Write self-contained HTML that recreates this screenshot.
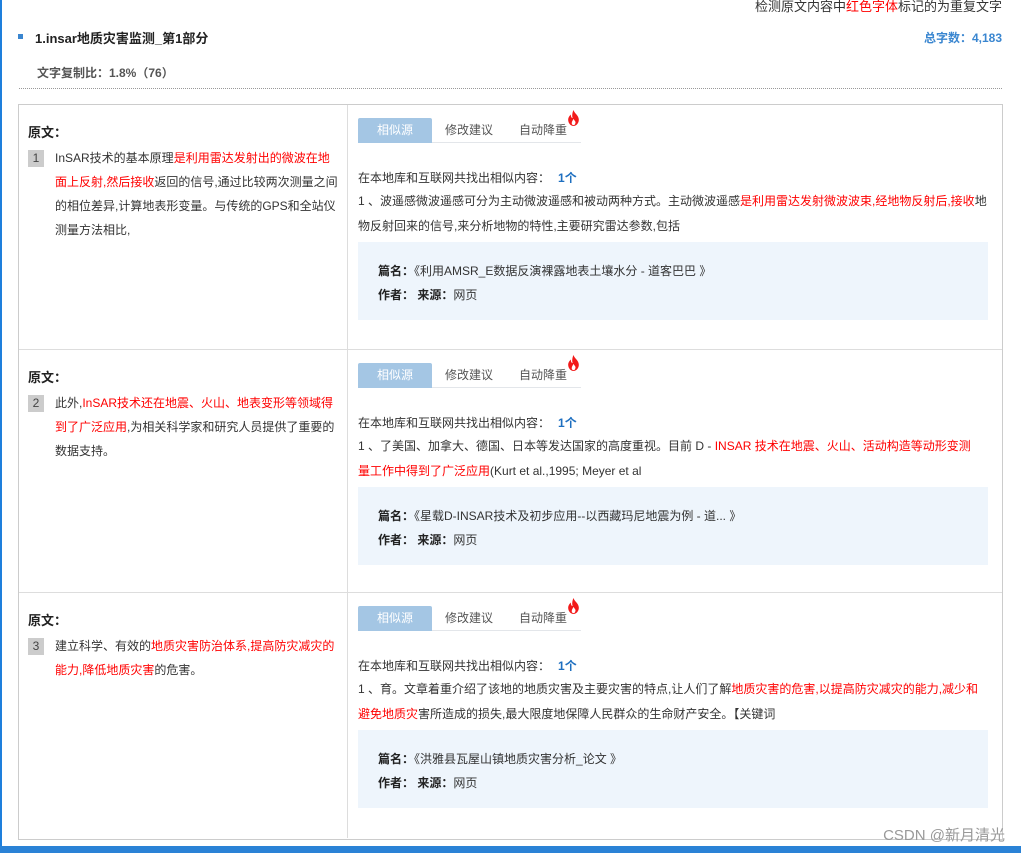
<!DOCTYPE html>
<html><head><meta charset="utf-8"><style>
*{margin:0;padding:0;box-sizing:border-box}
body{width:1021px;height:853px;position:relative;overflow:hidden;background:#fff;font-family:"Liberation Sans","Noto Sans CJK SC",sans-serif;font-size:12px;color:#333}
.a{position:absolute;white-space:nowrap}
.r{color:#f00}
.row{position:absolute;left:19px;width:983px}
.row .lab{position:absolute;left:9px;top:17px;font-size:13px;font-weight:bold;color:#222}
.row .num{position:absolute;left:9px;top:45px;width:16px;height:17px;background:#ccc;text-align:center;line-height:17px;font-size:12px;color:#444}
.row .lt{position:absolute;left:36px;top:41px;width:285px;line-height:24px;font-size:12px;white-space:normal}
.row .vd{position:absolute;left:328px;top:0;bottom:0;width:1px;background:#ddd}
.tabs{position:absolute;left:339px;top:13px;width:223px;height:25px;border-bottom:1px solid #e3e6ea}
.tab1{position:absolute;left:0;top:0;width:74px;height:25px;background:#a4c6e4;color:#fff;text-align:center;line-height:25px;border-radius:2px 2px 0 0}
.tab2{position:absolute;left:87px;top:0;line-height:25px;color:#555}
.tab3{position:absolute;left:161px;top:0;line-height:25px;color:#555}
.fire{position:absolute;left:548px;top:5px}
.find{position:absolute;left:339px;top:64px}
.find b{color:#1e6fc0;margin-left:8px}
.l1{position:absolute;left:339px;top:87px}
.l2{position:absolute;left:339px;top:112px}
.box{position:absolute;left:339px;top:137px;width:630px;height:78px;background:#eef5fc}
.box .p{position:absolute;left:20px;top:20px}
.box .q{position:absolute;left:20px;top:44px}
.box b{color:#222}
</style></head><body>
<div class="a" style="left:0;top:0;width:2px;height:853px;background:#1e7fdc"></div>
<div class="a" style="left:0;top:846px;width:1021px;height:7px;background:#2a82d6"></div>
<div class="a" style="right:19px;top:-4px;font-size:13px;color:#333">检测原文内容中<span class="r">红色字体</span>标记的为重复文字</div>
<div class="a" style="left:18px;top:34px;width:5px;height:5px;background:#3a86d0"></div>
<div class="a" style="left:35px;top:28px;font-size:13px;font-weight:bold;color:#222">1.insar地质灾害监测_第1部分</div>
<div class="a" style="right:19px;top:29px;font-size:12px;font-weight:bold;color:#3a86d0">总字数：4,183</div>
<div class="a" style="left:37px;top:64px;font-size:12px;font-weight:bold;color:#555">文字复制比：1.8%（76）</div>
<div class="a" style="left:19px;top:88px;width:983px;border-top:1px dotted #999"></div>
<div class="a" style="left:18px;top:104px;width:985px;height:736px;border:1px solid #ccc"></div>

<svg width="0" height="0" style="position:absolute"><defs><symbol id="f" viewBox="0 0 14 18"><path d="M7 0C8 4 13 6 13 11C13 15 10 18 7 18C4 18 1 15 1 11C1 8 3 6 4 5C4 8 5 9 6 9C5 6 6 2 7 0Z" fill="#f21a1a"/><path d="M7 10C8 12 10 13 9 15C9 16 8 17 7 17C6 17 5 16 5 15C5 13 6 12 7 10Z" fill="#fff"/></symbol></defs></svg>

<div class="row" style="top:105px;height:245px;border-bottom:1px solid #ddd">
<div class="lab">原文：</div><div class="num">1</div>
<div class="lt">InSAR技术的基本原理<span class="r">是利用雷达发射出的微波在地面上反射,然后接收</span>返回的信号,通过比较两次测量之间的相位差异,计算地表形变量。与传统的GPS和全站仪测量方法相比,</div>
<div class="vd"></div>
<div class="tabs"><div class="tab1">相似源</div><div class="tab2">修改建议</div><div class="tab3">自动降重</div></div>
<svg class="fire" width="13" height="16"><use href="#f"/></svg>
<div class="a find">在本地库和互联网共找出相似内容：<b>1个</b></div>
<div class="a l1">1 、波遥感微波遥感可分为主动微波遥感和被动两种方式。主动微波遥感<span class="r">是利用雷达发射微波波束,经地物反射后,接收</span>地</div>
<div class="a l2">物反射回来的信号,来分析地物的特性,主要研究雷达参数,包括</div>
<div class="box"><div class="a p"><b>篇名：</b>《利用AMSR_E数据反演裸露地表土壤水分 - 道客巴巴 》</div><div class="a q"><b>作者：  来源：</b>网页</div></div>
</div>

<div class="row" style="top:350px;height:243px;border-bottom:1px solid #ddd">
<div class="lab">原文：</div><div class="num">2</div>
<div class="lt">此外,<span class="r">InSAR技术还在地震、火山、地表变形等领域得到了广泛应用</span>,为相关科学家和研究人员提供了重要的数据支持。</div>
<div class="vd"></div>
<div class="tabs"><div class="tab1">相似源</div><div class="tab2">修改建议</div><div class="tab3">自动降重</div></div>
<svg class="fire" width="13" height="16"><use href="#f"/></svg>
<div class="a find">在本地库和互联网共找出相似内容：<b>1个</b></div>
<div class="a l1">1 、了美国、加拿大、德国、日本等发达国家的高度重视。目前 D - <span class="r">INSAR 技术在地震、火山、活动构造等动形变测</span></div>
<div class="a l2"><span class="r">量工作中得到了广泛应用</span>(Kurt et al.,1995; Meyer et al</div>
<div class="box"><div class="a p"><b>篇名：</b>《星载D-INSAR技术及初步应用--以西藏玛尼地震为例 - 道... 》</div><div class="a q"><b>作者：  来源：</b>网页</div></div>
</div>

<div class="row" style="top:593px;height:245px">
<div class="lab">原文：</div><div class="num">3</div>
<div class="lt">建立科学、有效的<span class="r">地质灾害防治体系,提高防灾减灾的能力,降低地质灾害</span>的危害。</div>
<div class="vd"></div>
<div class="tabs"><div class="tab1">相似源</div><div class="tab2">修改建议</div><div class="tab3">自动降重</div></div>
<svg class="fire" width="13" height="16"><use href="#f"/></svg>
<div class="a find">在本地库和互联网共找出相似内容：<b>1个</b></div>
<div class="a l1">1 、育。文章着重介绍了该地的地质灾害及主要灾害的特点,让人们了解<span class="r">地质灾害的危害,以提高防灾减灾的能力,减少和</span></div>
<div class="a l2"><span class="r">避免地质灾</span>害所造成的损失,最大限度地保障人民群众的生命财产安全。【关键词</div>
<div class="box"><div class="a p"><b>篇名：</b>《洪雅县瓦屋山镇地质灾害分析_论文 》</div><div class="a q"><b>作者：  来源：</b>网页</div></div>
</div>

<div class="a" style="right:16px;top:824px;font-size:15px;color:#999">CSDN @新月清光</div>
</body></html>
